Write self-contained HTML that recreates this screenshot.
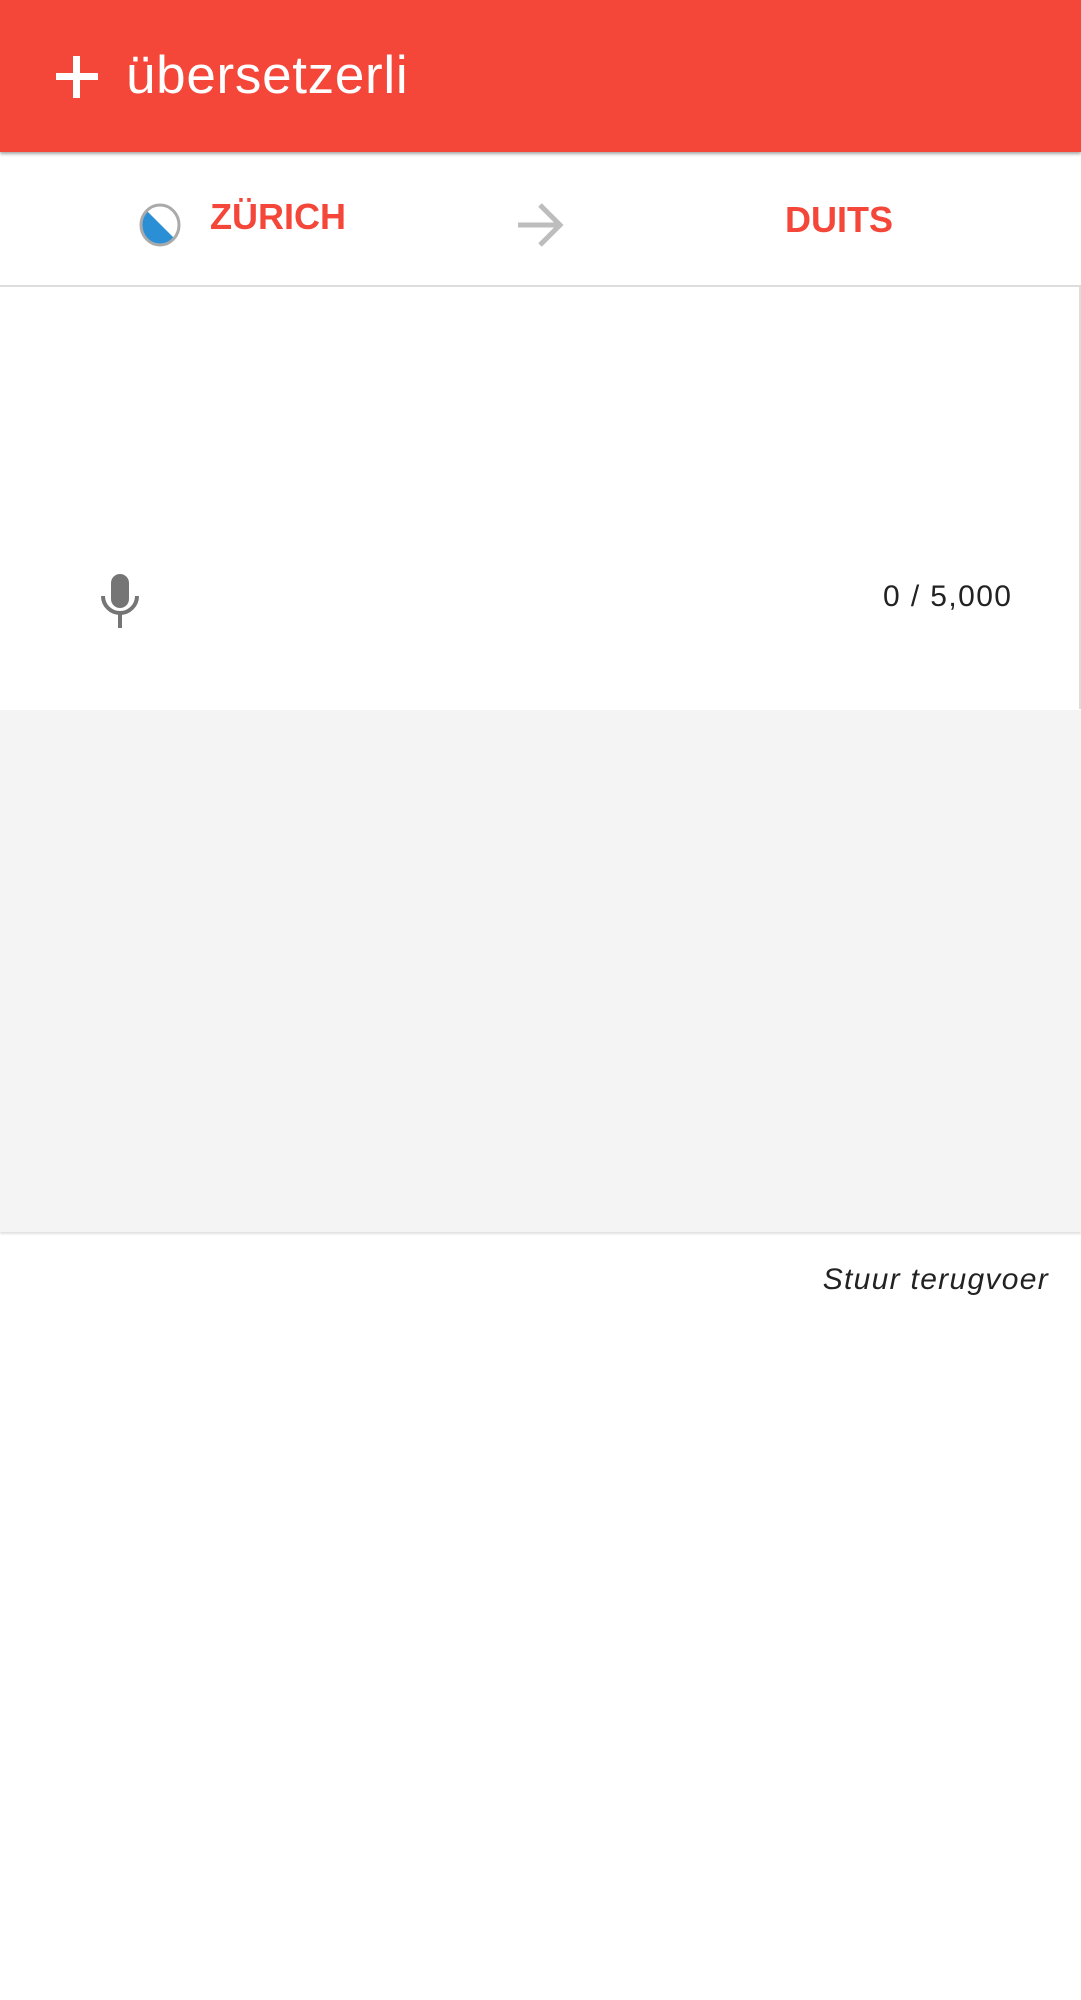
<!DOCTYPE html>
<html><head><meta charset="utf-8"><style>
body{margin:0;width:1081px;height:2000px;background:#fff;font-family:"Liberation Sans",sans-serif;position:relative;overflow:hidden}
.hdr{position:absolute;left:0;top:0;width:1081px;height:152px;background:#f44639;box-shadow:0 2px 3px rgba(0,0,0,.35)}
.title{position:absolute;left:126px;top:45px;font-size:53px;color:#fff;letter-spacing:0.7px}
.tab{position:absolute;font-weight:bold;color:#f44639;font-size:36px}
.line{position:absolute;left:0;width:1081px;height:2px;background:#ddd}
.gray{position:absolute;left:0;top:710px;width:1081px;height:522px;background:#f4f4f4;box-shadow:0 2px 2px rgba(0,0,0,.12)}
</style></head><body>
<div class="hdr">
<svg style="position:absolute;left:56px;top:56px" width="42" height="42"><rect x="17" y="0" width="7" height="42" fill="#fff"/><rect x="0" y="17" width="42" height="7" fill="#fff"/></svg>
<div class="title">übersetzerli</div>
</div>
<svg style="position:absolute;left:139px;top:203px" width="44" height="44" viewBox="0 0 44 44"><defs><clipPath id="c"><ellipse cx="21" cy="22" rx="19" ry="20"/></clipPath></defs><ellipse cx="21" cy="22" rx="19" ry="20" fill="#fff"/><polygon points="0,0 0,44 44,44" fill="#2b8fd6" clip-path="url(#c)"/><ellipse cx="21" cy="22" rx="19" ry="20" fill="none" stroke="#aaa" stroke-width="3"/></svg>
<div class="tab" style="left:210px;top:196px">ZÜRICH</div>
<svg style="position:absolute;left:516px;top:202px" width="48" height="46" viewBox="0 0 48 46"><path d="M2 23H44M24 3L44 23L24 43" fill="none" stroke="#bdbdbd" stroke-width="5"/></svg>
<div class="tab" style="left:785px;top:199px">DUITS</div>
<div class="line" style="top:285px"></div>
<div style="position:absolute;right:0;top:287px;width:2px;height:422px;background:#ddd"></div>
<svg style="position:absolute;left:100px;top:574px" width="42" height="54" viewBox="0 0 42 54"><rect x="11" y="0" width="18" height="34" rx="9" fill="#757575"/><path d="M3 22a17 17 0 0 0 34 0" fill="none" stroke="#757575" stroke-width="4"/><rect x="18" y="38" width="4" height="16" fill="#757575"/></svg>
<div style="position:absolute;left:883px;top:580px;font-size:30px;color:#222;letter-spacing:1.4px">0 / 5,000</div>
<div class="gray"></div>
<div style="position:absolute;right:32px;top:1263px;font-size:30px;font-style:italic;color:#222;letter-spacing:1.3px">Stuur terugvoer</div>
</body></html>
